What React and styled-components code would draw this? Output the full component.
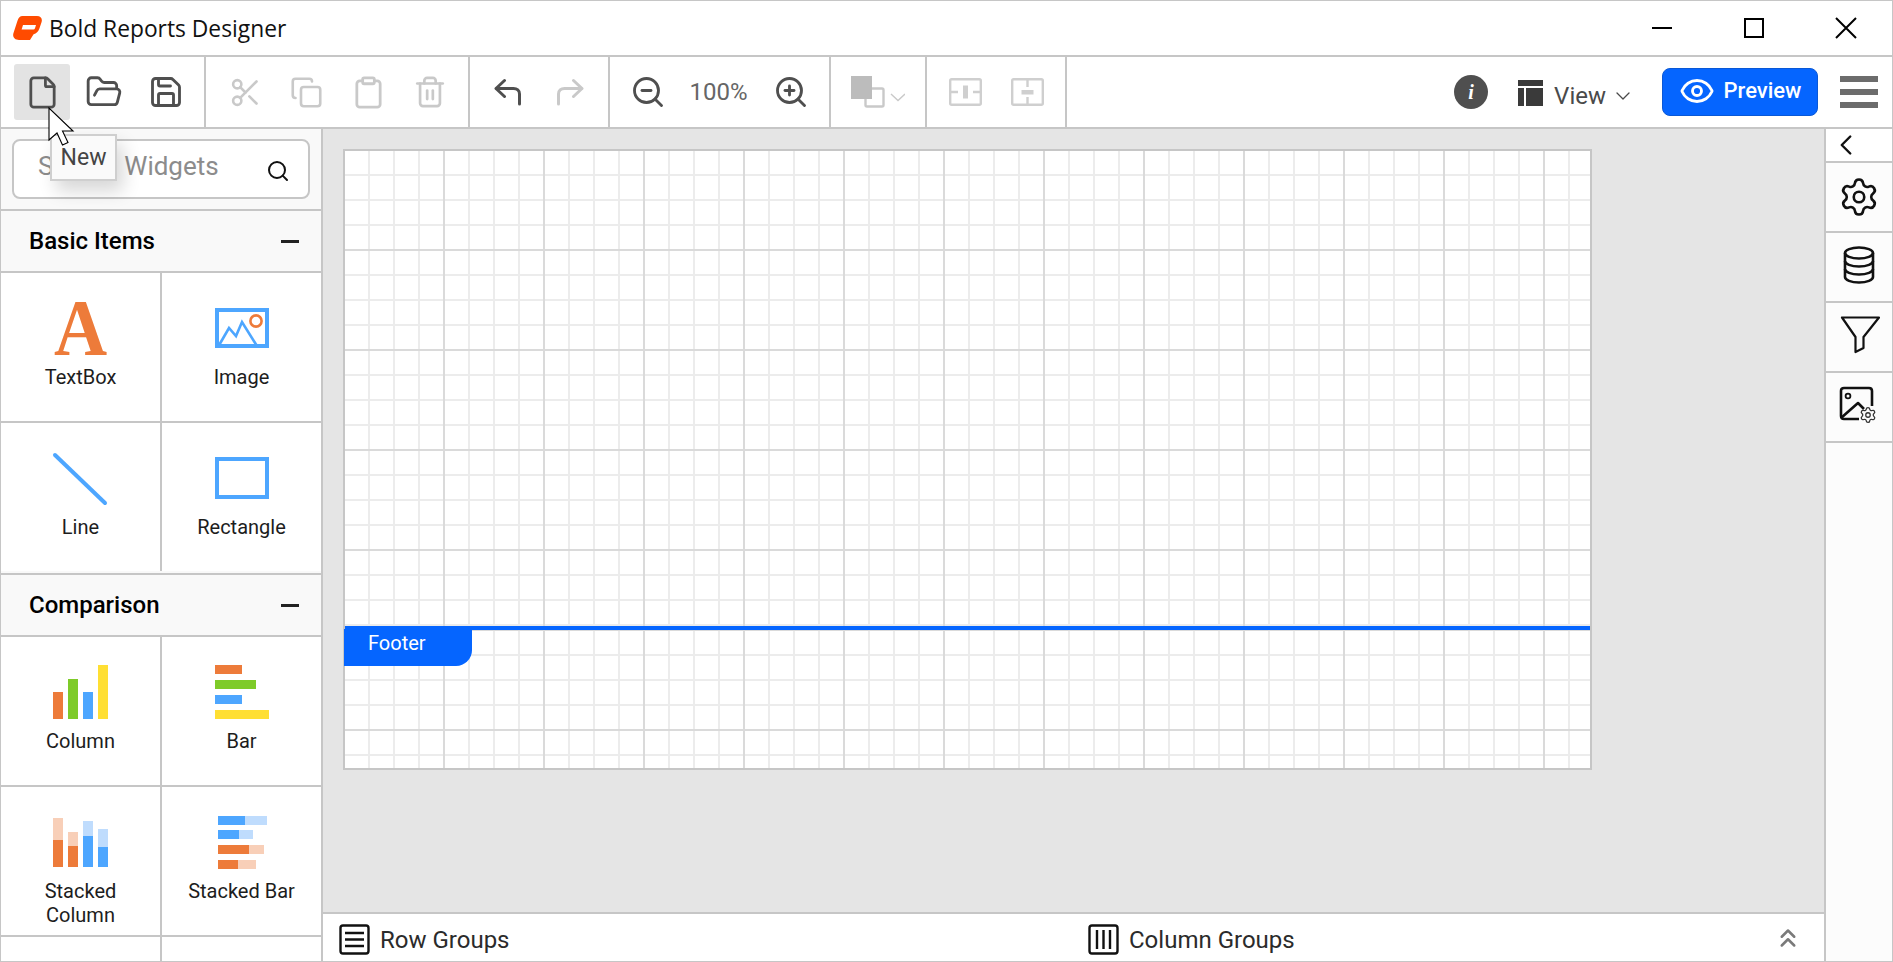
import React from 'react';
import styled, { createGlobalStyle } from 'styled-components';
import {
  File,
  FolderOpen,
  Save,
  Scissors,
  Copy,
  Clipboard,
  Trash2,
  ZoomIn,
  ZoomOut,
  Eye,
  Search,
  ChevronDown,
  ChevronLeft,
  ChevronsUp,
  Settings,
} from 'lucide-react';

const LINE = '#c6c6c6';
const ICON = '#4f4f4f';
const MUTED = '#c9c9c9';
const BLUE = '#0565ff';
const ORANGE = '#ed7b3a';
const SKY = '#4da6ff';
const PEACH = '#f8cfb8';
const ICE = '#bfdcfd';

const GlobalStyle = createGlobalStyle`
  html, body {
    margin: 0;
    padding: 0;
    overflow: hidden;
  }
  body {
    font-family: Roboto, "Liberation Sans", sans-serif;
    background: #fff;
  }
  * {
    box-sizing: border-box;
  }
`;

const Window = styled.div`
  position: relative;
  display: flex;
  flex-direction: column;
  width: 1893px;
  height: 962px;
  overflow: hidden;
  border: 1px solid ${LINE};
`;

const TitleBar = styled.header`
  flex: 0 0 56px;
  display: flex;
  align-items: center;
  padding-left: 12px;
  border-bottom: 2px solid ${LINE};
`;

const TitleText = styled.span`
  margin-left: 7px;
  font-family: 'Open Sans', 'Noto Sans', sans-serif;
  font-size: 22.8px;
  color: #111;
`;

const WindowControls = styled.div`
  display: flex;
  margin-left: auto;
  padding-right: 35px;
  gap: 70px;
`;

const ControlIcon = styled.svg`
  display: block;
  width: 22px;
  height: 22px;
  fill: none;
  stroke: #000;
  stroke-width: 2;
`;

const Toolbar = styled.div`
  flex: 0 0 72px;
  display: flex;
  align-items: stretch;
  border-bottom: 2px solid ${LINE};
`;

const ToolGroup = styled.div`
  flex: 0 0 ${(p) => p.$width}px;
  display: flex;
  align-items: center;
  gap: ${(p) => p.$gap ?? 6}px;
  padding-left: ${(p) => p.$pad}px;
  border-right: 2px solid ${LINE};
`;

const IconButton = styled.div`
  flex: 0 0 56px;
  height: 56px;
  display: flex;
  align-items: center;
  justify-content: center;
  border-radius: 3px;
  color: ${(p) => (p.$disabled ? MUTED : ICON)};
  background: ${(p) => (p.$active ? '#e3e3e3' : 'transparent')};
`;

const ZoomLabel = styled.span`
  flex: 0 0 87px;
  padding-right: 2px;
  text-align: center;
  font-size: 24px;
  color: #666;
`;

const RightTools = styled.div`
  display: flex;
  align-items: center;
  margin-left: auto;
  padding-right: 14px;
`;

const InfoBadge = styled.span`
  width: 34px;
  height: 34px;
  margin-right: 30px;
  display: flex;
  align-items: center;
  justify-content: center;
  border-radius: 50%;
  background: #4f4f4f;
  color: #fff;
  font-family: 'Liberation Serif', serif;
  font-style: italic;
  font-weight: 700;
  font-size: 20px;
`;

const ViewMenu = styled.div`
  display: flex;
  align-items: center;
  margin: 2px 27px 0 0;
  color: #4a4a4a;
  font-size: 24px;
`;

const ViewLabel = styled.span`
  margin: 6px 5px 0 11px;
`;

const ViewChevron = styled(ChevronDown)`
  margin-top: 6px;
`;

const PreviewButton = styled.div`
  width: 156px;
  height: 48px;
  margin-right: 22px;
  display: flex;
  align-items: center;
  justify-content: center;
  gap: 9px;
  border: 1px solid #0a58d6;
  border-radius: 8px;
  background: ${BLUE};
  color: #fff;
  font-size: 22px;
  font-weight: 500;
  padding-bottom: 3px;
`;

const Hamburger = styled.div`
  display: flex;
  flex-direction: column;
  gap: 7px;
  width: 38px;
  span {
    height: 6px;
    background: #6c6c6c;
  }
`;

const Body = styled.div`
  flex: 1;
  min-height: 0;
  display: flex;
`;

const LeftPanel = styled.aside`
  flex: 0 0 322px;
  overflow: hidden;
  background: #f9f9f9;
  border-right: 2px solid ${LINE};
`;

const SearchArea = styled.div`
  height: 80px;
  padding: 10px 11px 0 11px;
`;

const SearchBox = styled.div`
  height: 60px;
  display: flex;
  align-items: center;
  justify-content: space-between;
  padding: 0 18px 6px 24px;
  border: 2px solid ${LINE};
  border-radius: 8px;
  background: #fff;
  font-size: 26px;
  color: #8c8c8c;
  svg {
    color: #111;
    margin-top: 10px;
  }
`;

const SectionHeader = styled.div`
  height: 64px;
  display: flex;
  align-items: center;
  justify-content: space-between;
  padding: 0 22px 0 28px;
  border-top: 2px solid ${LINE};
  border-bottom: 2px solid ${LINE};
  font-size: 24px;
  font-weight: 500;
  color: #000;
`;

const Collapse = styled.span`
  width: 18px;
  height: 3px;
  background: #222;
`;

const WidgetGrid = styled.div`
  display: grid;
  grid-template-columns: 161px 1fr;
  padding-bottom: ${(p) => (p.$open ? 2 : 0)}px;
`;

const WidgetCell = styled.div`
  height: ${(p) => (p.$last ? 148 : 150)}px;
  display: flex;
  flex-direction: column;
  align-items: center;
  padding-top: 28px;
  background: #fff;
  border-bottom: ${(p) => (p.$last ? 'none' : `2px solid ${LINE}`)};
  border-right: ${(p) => (p.$side ? `2px solid ${LINE}` : 'none')};
`;

const WidgetIcon = styled.svg`
  display: block;
  flex: none;
  width: 56px;
  height: 56px;
  overflow: visible;
`;

const WidgetLabel = styled.div`
  margin-top: 8px;
  font-size: 20px;
  line-height: 24px;
  color: #1d1d1d;
  text-align: center;
`;

const Center = styled.main`
  flex: 1;
  min-width: 0;
  display: flex;
  flex-direction: column;
`;

const Canvas = styled.div`
  flex: 1;
  min-height: 0;
  padding: 20px 0 0 20px;
  background: #e5e5e5;
`;

const Sheet = styled.div`
  width: 1249px;
  height: 621px;
  display: flex;
  flex-direction: column;
  border: 2px solid ${LINE};
  background: #fff;
`;

const GridArea = styled.div`
  position: relative;
  flex: ${(p) => (p.$grow ? 1 : 'none')};
  height: ${(p) => p.$height ?? 'auto'};
  background-image:
    linear-gradient(to right, #dadada 2px, transparent 2px),
    linear-gradient(to bottom, #dadada 2px, transparent 2px),
    linear-gradient(to right, #ececec 2px, transparent 2px),
    linear-gradient(to bottom, #ececec 2px, transparent 2px);
  background-size: 100px 100px, 100px 100px, 25px 25px, 25px 25px;
  background-position:
    98px 0,
    0 ${(p) => p.$shift + 75}px,
    23px 0,
    0 ${(p) => p.$shift}px;
`;

const FooterArea = styled(GridArea)`
  border-top: 4px solid ${BLUE};
  background-origin: padding-box;
`;

const FooterTag = styled.div`
  position: absolute;
  left: -1px;
  top: -1px;
  width: 128px;
  height: 37px;
  padding: 0 0 9px 24px;
  display: flex;
  align-items: center;
  border-bottom-right-radius: 16px;
  background: ${BLUE};
  color: #fff;
  font-size: 20px;
`;

const BottomBar = styled.div`
  flex: 0 0 49px;
  display: flex;
  align-items: center;
  border-top: 2px solid ${LINE};
  background: #fff;
  padding: 4px 21px 0 16px;
`;

const GroupLabel = styled.div`
  display: flex;
  align-items: center;
  gap: 10px;
  flex: ${(p) => (p.$basis ? `0 0 ${p.$basis}px` : 'none')};
  font-size: 24px;
  color: #2b2b2b;
`;

const GroupIcon = styled.svg`
  display: block;
  width: 31px;
  height: 31px;
  fill: none;
  stroke: #111;
  stroke-width: 2.4;
`;

const Expand = styled.span`
  margin: -4px 0 0 auto;
  color: #7a7a7a;
  display: flex;
`;

const RightPanel = styled.aside`
  flex: 0 0 68px;
  display: flex;
  flex-direction: column;
  background: #fcfcfc;
  border-left: 2px solid ${LINE};
`;

const PanelTab = styled.div`
  height: ${(p) => (p.$small ? 34 : 70)}px;
  display: flex;
  align-items: center;
  justify-content: ${(p) => (p.$small ? 'flex-start' : 'center')};
  padding-left: ${(p) => (p.$small ? 3 : 0)}px;
  background: ${(p) => (p.$small ? '#fff' : 'transparent')};
  border-bottom: 2px solid ${LINE};
  color: #111;
`;

const PanelIcon = styled.svg`
  display: block;
  width: 42px;
  height: 42px;
  fill: none;
  stroke: #111;
  stroke-width: ${(p) => p.$stroke ?? 2.6};
  stroke-linejoin: round;
`;

const Tooltip = styled.div`
  position: absolute;
  left: 49px;
  top: 133px;
  width: 67px;
  height: 47px;
  display: flex;
  align-items: center;
  justify-content: center;
  border: 2px solid #cfcfcf;
  background: #fafafa;
  box-shadow: 6px 10px 18px rgba(0, 0, 0, 0.16);
  font-size: 23px;
  color: #444;
`;

const Pointer = styled.svg`
  position: absolute;
  left: 46px;
  top: 105px;
  width: 30px;
  height: 42px;
`;

const ArrowIcon = styled.svg`
  display: block;
  width: 28px;
  height: 28px;
  fill: none;
  stroke: ${(p) => p.$color};
  stroke-width: 3;
  stroke-linecap: round;
  stroke-linejoin: round;
  transform: ${(p) => (p.$flip ? 'scaleX(-1)' : 'none')};
`;

const Logo = () => (
  <svg width="29" height="24" viewBox="0 0 29 24">
    <path
      fill="#ff4b00"
      fillRule="evenodd"
      d="M9.5 0H24C27.8 0 29.6 2.6 28.6 6L26.4 12.6C25.2 16 23.4 17.6 20.6 18.2L17 24H6C1.6 24-.8 21 .5 17L4.4 5C5.5 1.8 7 0 9.5 0ZM10 9 8.6 13.4H20.4C21.2 13.4 21.7 13 22 12.2L23 9Z"
    />
  </svg>
);

const UndoIcon = ({ flip, color }) => (
  <ArrowIcon viewBox="0 0 28 28" $flip={flip} $color={color}>
    <path d="M10.5 2.5 2 10.5 10.5 18.5" />
    <path d="M2.5 10.5H19.5C23 10.5 25.5 12.5 25.5 16V26" />
  </ArrowIcon>
);

const FillIcon = () => (
  <svg width="60" height="34" viewBox="0 0 60 34" fill="none">
    <rect x="20.5" y="13.5" width="18" height="18" rx="1.5" stroke="#c9c9c9" strokeWidth="2.4" />
    <rect x="6" y="1" width="21" height="23" fill="#bcbcbc" />
    <path d="M46 19l7 6.5 7-6.5" stroke="#c9c9c9" strokeWidth="1.4" />
  </svg>
);

const SplitIcon = ({ vertical }) => (
  <svg width="33" height="28" viewBox="0 0 33 28" fill="none" stroke="#cfcfcf" strokeWidth="2.4">
    <rect x="1.2" y="1.2" width="30.6" height="25.6" rx="1.5" />
    {vertical ? (
      <>
        <path d="M16.5 1v8M16.5 19v8" />
        <rect x="10.5" y="12" width="12" height="4.5" fill="#cfcfcf" stroke="none" />
      </>
    ) : (
      <>
        <path d="M1 14h8M24 14h8" />
        <rect x="14" y="7.5" width="5" height="13" fill="#cfcfcf" stroke="none" />
      </>
    )}
  </svg>
);

const ViewIcon = () => (
  <svg width="25" height="26" viewBox="0 0 25 26" fill="#3a3a3a">
    <rect width="25" height="6" />
    <rect y="8" width="6" height="18" />
    <rect x="8" y="8" width="17" height="18" />
  </svg>
);

const TextBoxIcon = () => (
  <WidgetIcon viewBox="0 0 56 56">
    <text
      transform="translate(27.5 54) scale(0.92 1)"
      textAnchor="middle"
      fontFamily="Liberation Serif, serif"
      fontWeight="700"
      fontSize="80"
      fill={ORANGE}
    >
      A
    </text>
  </WidgetIcon>
);

const ImageIcon = () => (
  <WidgetIcon viewBox="0 0 56 56" fill="none">
    <rect x="3" y="9" width="50" height="36" stroke={SKY} strokeWidth="4" />
    <path d="M4 46 15 27l7 8 6-14 15 24" stroke={SKY} strokeWidth="2.6" />
    <circle cx="42" cy="20" r="5.6" fill="#fff" stroke={ORANGE} strokeWidth="2.6" />
  </WidgetIcon>
);

const LineIcon = () => (
  <WidgetIcon viewBox="0 0 56 56" fill="none">
    <path d="M2 4 52 52" stroke={SKY} strokeWidth="4" strokeLinecap="round" />
  </WidgetIcon>
);

const RectangleIcon = () => (
  <WidgetIcon viewBox="0 0 56 56" fill="none">
    <rect x="3" y="8" width="50" height="38" stroke={SKY} strokeWidth="4" />
  </WidgetIcon>
);

const ColumnIcon = () => (
  <WidgetIcon viewBox="0 0 56 56">
    <rect x="0" y="27" width="10" height="27" fill={ORANGE} />
    <rect x="15" y="14" width="10" height="40" fill="#7ecb29" />
    <rect x="30" y="27" width="10" height="27" fill={SKY} />
    <rect x="45" y="0" width="10" height="54" fill="#ffdf33" />
  </WidgetIcon>
);

const BarIcon = () => (
  <WidgetIcon viewBox="0 0 56 56">
    <rect x="1" y="0" width="27" height="9" fill={ORANGE} />
    <rect x="1" y="15" width="41" height="9" fill="#7ecb29" />
    <rect x="1" y="30" width="27" height="9" fill={SKY} />
    <rect x="1" y="45" width="54" height="9" fill="#ffdf33" />
  </WidgetIcon>
);

const stackedColumns = [
  { x: 0, top: 3, mid: 25, light: PEACH, dark: ORANGE },
  { x: 15, top: 17, mid: 31, light: PEACH, dark: ORANGE },
  { x: 30, top: 6, mid: 21, light: ICE, dark: SKY },
  { x: 45, top: 14, mid: 32, light: ICE, dark: SKY },
];

const StackedColumnIcon = () => (
  <WidgetIcon viewBox="0 0 56 56">
    {stackedColumns.map((c) => (
      <g key={c.x}>
        <rect x={c.x} y={c.top} width="10" height={c.mid - c.top} fill={c.light} />
        <rect x={c.x} y={c.mid} width="10" height={52 - c.mid} fill={c.dark} />
      </g>
    ))}
  </WidgetIcon>
);

const stackedBars = [
  { y: 1, mid: 31, end: 53, light: ICE, dark: SKY },
  { y: 15, mid: 25, end: 39, light: ICE, dark: SKY },
  { y: 30, mid: 35, end: 50, light: PEACH, dark: ORANGE },
  { y: 45, mid: 24, end: 42, light: PEACH, dark: ORANGE },
];

const StackedBarIcon = () => (
  <WidgetIcon viewBox="0 0 56 56">
    {stackedBars.map((b) => (
      <g key={b.y}>
        <rect x="4" y={b.y} width={b.mid - 4} height="9" fill={b.dark} />
        <rect x={b.mid} y={b.y} width={b.end - b.mid} height="9" fill={b.light} />
      </g>
    ))}
  </WidgetIcon>
);

const basicItems = [
  { label: 'TextBox', icon: <TextBoxIcon /> },
  { label: 'Image', icon: <ImageIcon /> },
  { label: 'Line', icon: <LineIcon /> },
  { label: 'Rectangle', icon: <RectangleIcon /> },
];

const comparisonItems = [
  { label: 'Column', icon: <ColumnIcon /> },
  { label: 'Bar', icon: <BarIcon /> },
  { label: <>Stacked<br />Column</>, icon: <StackedColumnIcon /> },
  { label: 'Stacked Bar', icon: <StackedBarIcon /> },
];

const Widgets = ({ items, open }) => (
  <WidgetGrid $open={open}>
    {items.map((item, i) => (
      <WidgetCell key={i} $side={i % 2 === 0} $last={open && i >= 2}>
        {item.icon}
        <WidgetLabel>{item.label}</WidgetLabel>
      </WidgetCell>
    ))}
    {!open && (
      <>
        <WidgetCell $side />
        <WidgetCell />
      </>
    )}
  </WidgetGrid>
);

const App = () => (
  <Window>
    <GlobalStyle />
    <TitleBar>
      <Logo />
      <TitleText>Bold Reports Designer</TitleText>
      <WindowControls>
        <ControlIcon viewBox="0 0 22 22">
          <path d="M1 11H21" />
        </ControlIcon>
        <ControlIcon viewBox="0 0 22 22">
          <rect x="2" y="2" width="18" height="18" />
        </ControlIcon>
        <ControlIcon viewBox="0 0 22 22">
          <path d="M1 1 21 21M21 1 1 21" />
        </ControlIcon>
      </WindowControls>
    </TitleBar>

    <Toolbar>
      <ToolGroup $width={205} $pad={13}>
        <IconButton $active><File size={35} strokeWidth={1.9} /></IconButton>
        <IconButton><FolderOpen size={38} strokeWidth={1.8} /></IconButton>
        <IconButton><Save size={36} strokeWidth={1.9} /></IconButton>
      </ToolGroup>
      <ToolGroup $width={264} $pad={11} $gap={5.5}>
        <IconButton $disabled><Scissors size={33} strokeWidth={1.9} /></IconButton>
        <IconButton $disabled><Copy size={33} strokeWidth={1.9} /></IconButton>
        <IconButton $disabled><Clipboard size={35} strokeWidth={1.9} /></IconButton>
        <IconButton $disabled><Trash2 size={34} strokeWidth={1.9} /></IconButton>
      </ToolGroup>
      <ToolGroup $width={140} $pad={10}>
        <IconButton><UndoIcon color={ICON} /></IconButton>
        <IconButton><UndoIcon flip color={MUTED} /></IconButton>
      </ToolGroup>
      <ToolGroup $width={221} $pad={10} $gap={0}>
        <IconButton><ZoomOut size={36} strokeWidth={1.9} /></IconButton>
        <ZoomLabel>100%</ZoomLabel>
        <IconButton><ZoomIn size={36} strokeWidth={1.9} /></IconButton>
      </ToolGroup>
      <ToolGroup $width={96} $pad={14}>
        <FillIcon />
      </ToolGroup>
      <ToolGroup $width={140} $pad={10}>
        <IconButton><SplitIcon /></IconButton>
        <IconButton><SplitIcon vertical /></IconButton>
      </ToolGroup>
      <RightTools>
        <InfoBadge>i</InfoBadge>
        <ViewMenu>
          <ViewIcon />
          <ViewLabel>View</ViewLabel>
          <ViewChevron size={24} strokeWidth={1.3} />
        </ViewMenu>
        <PreviewButton>
          <Eye size={36} strokeWidth={1.9} />
          Preview
        </PreviewButton>
        <Hamburger>
          <span />
          <span />
          <span />
        </Hamburger>
      </RightTools>
    </Toolbar>

    <Body>
      <LeftPanel>
        <SearchArea>
          <SearchBox>
            Search Widgets
            <Search size={24} strokeWidth={2} />
          </SearchBox>
        </SearchArea>
        <SectionHeader>
          Basic Items
          <Collapse />
        </SectionHeader>
        <Widgets items={basicItems} open />
        <SectionHeader>
          Comparison
          <Collapse />
        </SectionHeader>
        <Widgets items={comparisonItems} />
      </LeftPanel>

      <Center>
        <Canvas>
          <Sheet>
            <GridArea $grow $shift={23} />
            <FooterArea $height="142px" $shift={24}>
              <FooterTag>Footer</FooterTag>
            </FooterArea>
          </Sheet>
        </Canvas>
        <BottomBar>
          <GroupLabel $basis={749}>
            <GroupIcon viewBox="0 0 31 31">
              <rect x="1.5" y="1.5" width="28" height="28" rx="2.5" />
              <path d="M6 9H25M6 15.5H25M6 22H25" />
            </GroupIcon>
            Row Groups
          </GroupLabel>
          <GroupLabel>
            <GroupIcon viewBox="0 0 31 31">
              <rect x="1.5" y="1.5" width="28" height="28" rx="2.5" />
              <path d="M9 6V25M15.5 6V25M22 6V25" />
            </GroupIcon>
            Column Groups
          </GroupLabel>
          <Expand>
            <ChevronsUp size={30} strokeWidth={2} />
          </Expand>
        </BottomBar>
      </Center>

      <RightPanel>
        <PanelTab $small>
          <ChevronLeft size={34} strokeWidth={1.7} />
        </PanelTab>
        <PanelTab>
          <Settings size={42} strokeWidth={1.5} />
        </PanelTab>
        <PanelTab>
          <PanelIcon viewBox="0 0 42 42">
            <ellipse cx="21" cy="7" rx="14" ry="5.5" />
            <path d="M7 7V31C7 34 13 36.5 21 36.5S35 34 35 31V7" />
            <path d="M7 15C7 18 13 20.5 21 20.5S35 18 35 15" />
            <path d="M7 23C7 26 13 28.5 21 28.5S35 26 35 23" />
          </PanelIcon>
        </PanelTab>
        <PanelTab>
          <PanelIcon viewBox="0 0 42 42" $stroke={2.2}>
            <path d="M4 1.5H41L25.5 21V32L17.5 36V21Z" />
          </PanelIcon>
        </PanelTab>
        <PanelTab>
          <PanelIcon viewBox="0 0 42 42">
            <path d="M21 33H6C4 33 3 32 3 30V5C3 3 4 2 6 2H31C33 2 34 3 34 5V20" />
            <path d="M3 32 20 17 26 23" />
            <circle cx="10" cy="10" r="2.4" strokeWidth="1.8" />
            <Settings x="21" y="20" width="18" height="18" strokeWidth={1.7} color="#333" />
          </PanelIcon>
        </PanelTab>
      </RightPanel>
    </Body>

    <Tooltip>New</Tooltip>
    <Pointer viewBox="0 0 30 42">
      <path d="M2 2V34L10 27 15.5 39 21 36.5 15.5 25H26Z" fill="#fff" stroke="#000" strokeWidth="1.1" />
    </Pointer>
  </Window>
);

export default App;
